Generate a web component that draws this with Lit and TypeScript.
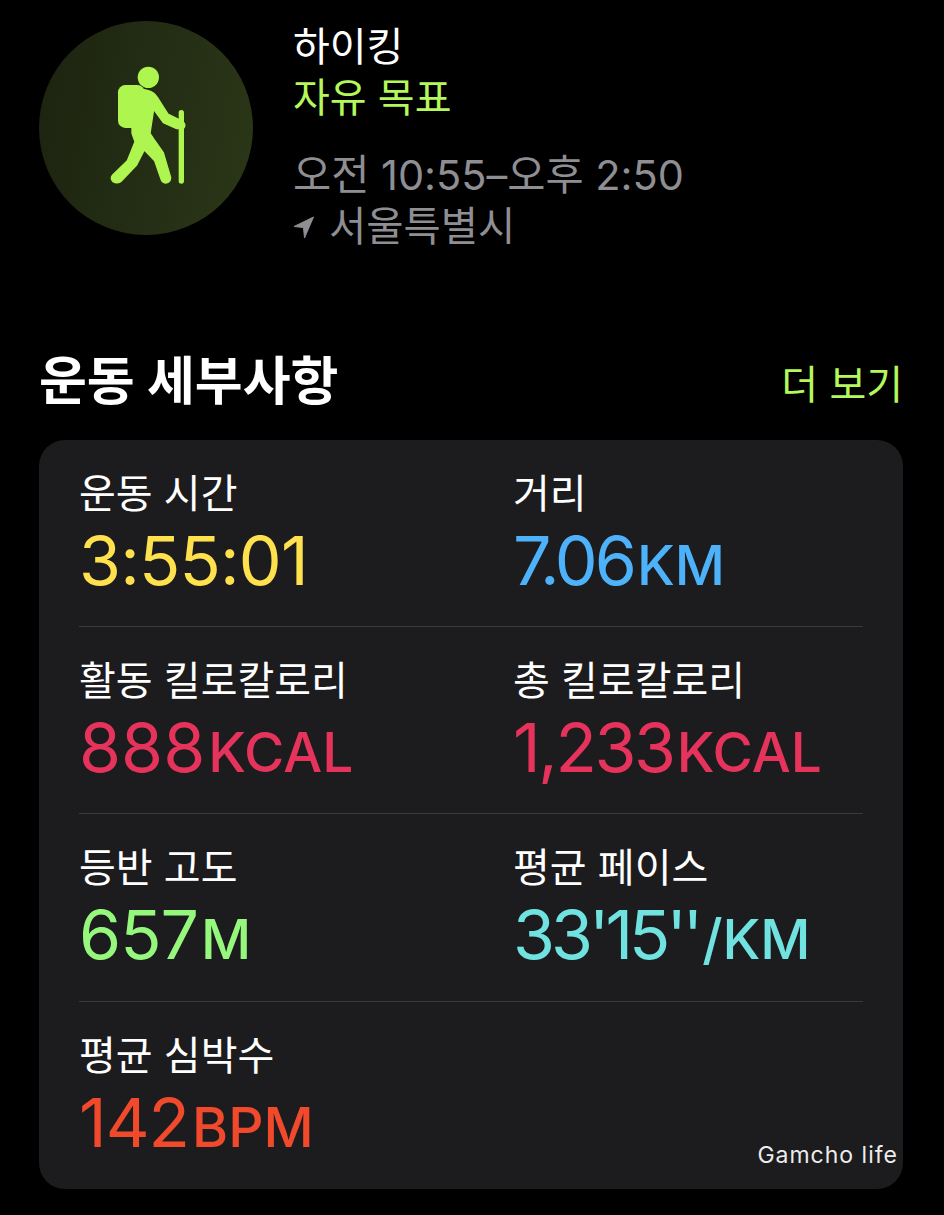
import { LitElement, html, css, svg } from "lit";
import { customElement } from "lit/decorators.js";

const METRICS = [
  { label: "운동 시간", value: "3:55:01", unit: "", color: "#ffe04d", track: -0.8 },
  { label: "거리", value: "7.06", unit: "KM", color: "#4db2fa", track: -3 },
  { label: "활동 킬로칼로리", value: "888", unit: "KCAL", color: "#e6335c", track: 0 },
  { label: "총 킬로칼로리", value: "1,233", unit: "KCAL", color: "#e6335c", track: -2.4 },
  { label: "등반 고도", value: "657", unit: "M", color: "#96f77d", track: -1 },
  { label: "평균 페이스", value: "33'15''", unit: "/KM", color: "#70e3e0", track: -4 },
  { label: "평균 심박수", value: "142", unit: "BPM", color: "#f0492b", track: -1 },
];

const hiker = svg`
  <circle cx="385" cy="232" r="32" fill="#aef64f"/>
  <rect x="294" y="255" width="80" height="129" rx="22" fill="#aef64f"/>
  <path fill="#aef64f" stroke="#aef64f" stroke-width="4" stroke-linejoin="round" d="M345 262 L385 272 Q402 276 412 292 L444 342 L488 364 Q500 376 490 386 L470 386 L430 368 L401 328 L390 400 L402 418 L430 458 L452 532 Q452 548 438 549 Q428 549 424 540 L404 482 L373 450 L350 495 L302 545 Q290 552 278 544 Q270 535 278 525 L322 482 L345 425 L336 400 L336 300 Z"/>
  <rect x="476" y="330" width="16" height="221" rx="8" fill="#aef64f"/>
`;

@customElement("app-root")
export class AppRoot extends LitElement {
  static styles = css`
    :host {
      display: block;
      width: 944px;
      height: 1215px;
      overflow: hidden;
      background: #000;
      color: #fff;
      font-family: "Inter", "Noto Sans CJK KR", sans-serif;
    }
    .head {
      display: flex;
      gap: 40px;
      padding: 21px 0 0 39px;
      height: 319px;
      box-sizing: border-box;
    }
    .badge {
      width: 214px;
      height: 214px;
      border-radius: 50%;
      background: linear-gradient(100deg, #1c2310, #2b3718);
      flex: none;
    }
    .badge svg {
      display: block;
      width: 214px;
      height: 214px;
    }
    .info {
      display: flex;
      flex-direction: column;
      font-size: 40px;
      line-height: 51px;
    }
    .goal {
      color: #b4f85c;
    }
    .time {
      color: #8e8e93;
      margin-top: 27px;
      line-height: 51px;
      font-size: 41.5px;
    }
    .place {
      color: #8e8e93;
      display: flex;
      align-items: center;
      gap: 14px;
      line-height: 50px;
      font-size: 40.5px;
      margin-top: 1px;
    }
    .place svg {
      width: 22px;
      height: 23px;
      flex: none;
    }
    .section {
      display: flex;
      justify-content: space-between;
      align-items: center;
      padding: 4px 41px 0 39px;
      height: 121px;
      box-sizing: border-box;
    }
    .section h2 {
      margin: 0;
      font-size: 52px;
      font-weight: 700;
      line-height: 1;
    }
    .more {
      color: #b4f85c;
      font-size: 40px;
    }
    .card {
      position: relative;
      margin: 0 41px 0 39px;
      height: 749px;
      box-sizing: border-box;
      background: #1c1c1e;
      border-radius: 26px;
      padding: 0 40px;
    }
    .grid {
      display: grid;
      grid-template-columns: 434px 350px;
      grid-auto-rows: 187.2px;
    }
    .cell {
      padding-top: 28px;
      box-sizing: border-box;
      border-bottom: 1px solid #3a3a3c;
    }
    .cell.last {
      border-bottom: none;
    }
    .label {
      font-size: 40px;
      line-height: 52px;
      color: #fff;
    }
    .value {
      font-size: 68px;
      line-height: 80px;
      font-weight: 400;
      white-space: nowrap;
    }
    .unit {
      font-size: 55px;
      font-weight: 500;
      letter-spacing: 0;
      margin-left: 3px;
    }
    .mark {
      position: absolute;
      right: 5px;
      bottom: 20px;
      font-size: 23px;
      letter-spacing: 1px;
      line-height: 28px;
      color: #ececec;
    }
  `;

  render() {
    return html`
      <div class="head">
        <div class="badge">
          <svg viewBox="57 63 642 642">${hiker}</svg>
        </div>
        <div class="info">
          <div>하이킹</div>
          <div class="goal">자유 목표</div>
          <div class="time">오전 10:55–오후 2:50</div>
          <div class="place">
            <svg viewBox="0 0 22 23"><path fill="#8e8e93" stroke="#8e8e93" stroke-linejoin="round" d="M20.5 1 L1 10.5 L10.5 11.5 L11.5 22 Z"/></svg>
            <span>서울특별시</span>
          </div>
        </div>
      </div>
      <div class="section">
        <h2>운동 세부사항</h2>
        <span class="more">더 보기</span>
      </div>
      <div class="card">
        <div class="grid">
          ${METRICS.map(
            (m, i) => html`
              <div class="cell ${i >= 6 ? "last" : ""}">
                <div class="label">${m.label}</div>
                <div class="value" style="color:${m.color};letter-spacing:${m.track}px">${m.value}<span class="unit">${m.unit}</span></div>
              </div>
            `
          )}
        </div>
        <div class="mark">Gamcho life</div>
      </div>
    `;
  }
}
